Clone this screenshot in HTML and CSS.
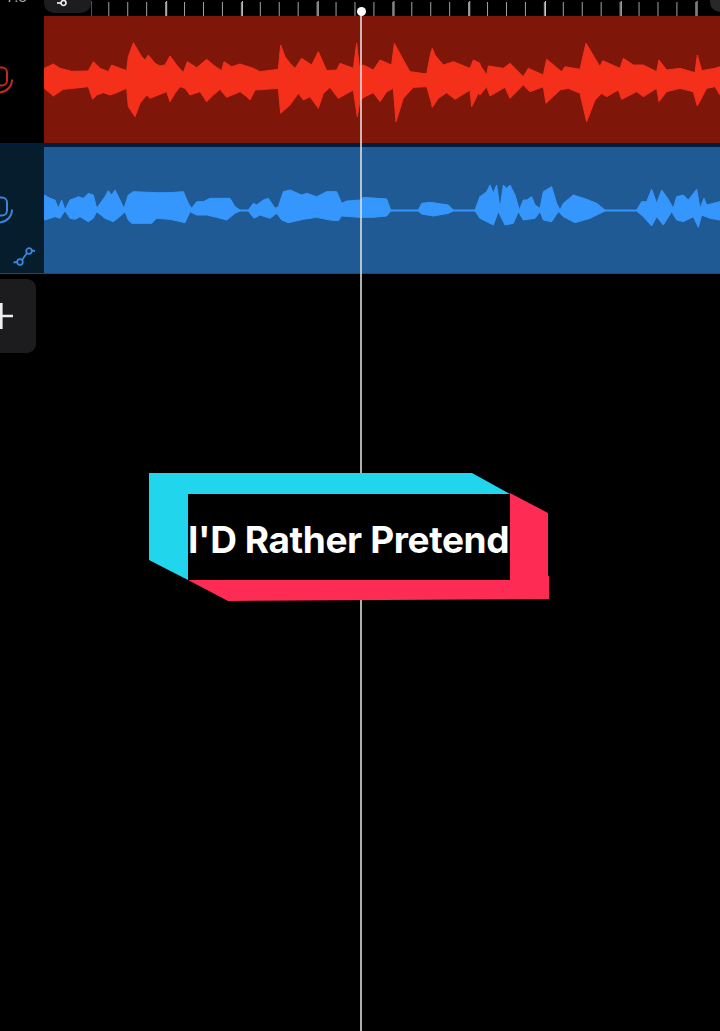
FILE: index.html
```html
<!DOCTYPE html>
<html lang="en">
<head>
<meta charset="utf-8">
<title>I'D Rather Pretend</title>
<link rel="stylesheet" href="styles.css">
</head>
<body>
<main class="screen">
  <header class="topbar">
    <div class="time">7.5</div>
    <div class="pill">
      <svg class="pill-icon" viewBox="0 0 11 8"><circle cx="6.500" cy="3" r="2.500"/><path d="M0 3h4"/></svg>
    </div>
    <div class="ruler"></div>
    <div class="corner"></div>
  </header>

  <section class="track track-red">
    <div class="track-head">
      <svg class="mic" viewBox="0 0 14 34"><path d="M-3 2.500h5a5 5 0 0 1 5 5v8a5 5 0 0 1-5 5h-5"/><path d="M12 14.500c0 7-5 12-12 13"/></svg>
    </div>
    <svg class="wave" viewBox="132 48 2028 381" preserveAspectRatio="none">
      <polygon points="133,205 160,192 180,205 215,214 265,213 280,185 300,205 325,215 335,195 360,205 380,212 385,170 400,128 425,170 435,180 445,165 465,190 480,198 495,195 510,168 530,195 550,218 562,185 590,203 620,178 640,195 665,212 672,185 695,200 720,192 720,275 680,292 660,268 640,285 620,305 600,275 570,285 555,265 540,260 525,280 510,305 500,275 450,295 440,285 420,310 405,350 385,320 380,265 350,278 330,285 310,278 290,285 278,298 265,260 220,265 190,268 160,288 133,265"/>
      <polygon transform="translate(720 0)" points="0,192 40,205 60,215 115,208 122,135 135,170 150,190 165,205 185,175 215,195 235,155 260,212 290,210 300,190 340,205 350,130 358,200 370,195 400,210 420,180 455,195 463,130 490,180 510,215 560,222 572,160 577,145 585,165 610,195 640,185 690,205 700,180 720,190 720,285 715,280 695,320 690,270 645,298 620,278 595,295 577,322 572,300 560,260 520,262 490,295 468,365 460,265 440,275 420,305 400,278 375,290 360,300 352,350 340,270 295,295 270,262 250,280 235,325 210,290 190,300 175,280 150,315 122,340 115,265 45,270 30,300 20,290 0,275"/>
      <polygon transform="translate(1440 0)" points="0,195 20,225 25,198 70,205 90,190 130,230 145,205 190,225 200,178 245,215 255,200 300,208 318,130 345,175 360,200 368,182 420,205 430,175 460,195 490,195 530,215 537,180 560,210 600,205 645,218 652,165 665,212 705,205 720,200 720,285 705,260 680,265 652,318 640,275 600,265 560,275 537,305 530,265 490,290 470,275 425,298 415,270 380,290 365,280 345,300 320,365 300,280 265,265 240,270 198,310 190,260 150,275 130,255 90,295 75,262 30,288 20,260 0,285"/>
    </svg>
  </section>

  <section class="track track-blue">
    <div class="track-head">
      <svg class="mic mic-blue" viewBox="0 0 14 34"><path d="M-3 2.500h5a5 5 0 0 1 5 5v8a5 5 0 0 1-5 5h-5"/><path d="M12 14.500c0 7-5 12-12 13"/></svg>
      <svg class="link" viewBox="0 0 24 20"><circle cx="8" cy="16" r="2.800"/><circle cx="17" cy="5" r="2.800"/><path d="M10 14l5-7M1.500 16.500l3.500-.5M19.500 4.500l3.500 .5"/></svg>
    </div>
    <svg class="wave" viewBox="132 21 2028 378" preserveAspectRatio="none">
      <polygon points="133,165 150,175 165,180 175,205 185,180 195,210 210,180 225,175 235,170 250,175 265,160 280,165 290,205 315,170 325,152 335,165 345,150 360,180 372,205 385,165 400,155 470,158 510,158 550,155 565,190 575,205 590,185 610,185 630,175 690,175 705,200 720,210 720,213 705,220 680,240 650,232 620,225 590,225 570,215 555,248 510,238 470,235 455,250 395,250 385,240 375,215 365,225 340,245 315,235 290,215 280,235 265,245 240,230 225,238 210,235 195,212 180,235 165,230 150,235 133,240"/>
      <polygon transform="translate(720 0)" points="0,210 25,210 40,190 50,195 70,180 85,175 105,205 115,200 130,155 150,150 185,165 200,160 230,170 260,155 290,155 305,190 320,183 360,180 370,172 440,177 452,210 535,210 545,190 570,187 625,195 640,210 705,210 720,170 720,235 705,213 640,213 625,220 580,228 545,222 535,213 452,213 440,228 400,232 360,232 305,228 295,242 270,240 230,232 190,238 145,248 125,240 110,220 90,235 60,225 42,235 25,213 0,213"/>
      <polygon transform="translate(1440 0)" points="0,170 20,155 30,135 40,160 50,135 60,205 70,135 80,145 90,135 105,165 118,210 130,180 140,180 155,170 165,195 180,205 190,155 215,140 230,190 240,210 250,190 280,165 320,178 350,190 375,210 470,210 485,185 500,185 515,148 530,190 545,150 560,170 580,205 590,170 610,165 625,180 650,148 660,205 672,175 680,195 720,185 720,240 690,235 665,225 655,262 640,230 610,245 590,240 575,215 550,255 530,230 515,258 490,230 470,213 375,213 330,235 285,248 250,230 235,215 215,245 190,240 180,215 165,235 130,240 115,215 100,250 75,255 55,215 40,255 20,245 0,235"/>
    </svg>
  </section>

  <button class="add" type="button" aria-label="Add track">
    <svg class="add-icon" viewBox="0 0 14 28"><path d="M1.300 1v26M0 14h13"/></svg>
  </button>

  <div class="caption">
    <svg class="shards" viewBox="0 0 401 129">
      <polygon class="shard-cyan" points="0,0 323,0 361,21 39,21 39,107 0,87"/>
      <polygon class="shard-pink" points="39,107 361,107 361,20 399,40 399,103 400,103 400,126 79,128"/>
    </svg>
    <p class="caption-text">I'D Rather Pretend</p>
  </div>

  <div class="playhead"></div>
</main>
</body>
</html>
```
FILE: styles.css
```css
* { box-sizing: border-box; }
html, body { margin: 0; background: #000; }
.screen {
  position: relative;
  width: 720px;
  height: 1031px;
  overflow: hidden;
  background: #000;
}
.topbar {
  display: flex;
  height: 16px;
  overflow: hidden;
}
.time {
  width: 44px;
  margin-top: -11px;
  height: 15px;
  font: 15px/15px "Liberation Sans", sans-serif;
  color: #a8a8a8;
  padding-left: 6px;
}
.pill {
  width: 47px;
  height: 13px;
  padding-left: 13px;
  background: #1d1d20;
  border-radius: 0 0 10px 10px;
}
.pill-icon {
  display: block;
  width: 11px;
  height: 8px;
  fill: none;
  stroke: #eee;
  stroke-width: 1.7;
}
.ruler {
  flex: 1;
  height: 15px;
  margin-top: 1px;
  background-image:
    linear-gradient(90deg, #c8c8c8 0, #c8c8c8 1.4px, transparent 1.4px),
    linear-gradient(90deg, #a4a4a4 0, #a4a4a4 1.3px, transparent 1.3px);
  background-repeat: repeat-x;
  background-size: 75.78px 15px, 18.945px 14px;
  background-position: 75.180px 0, 17.3px 1px;
}
.corner {
  width: 10px;
  height: 12px;
  background: #28282b;
  border-radius: 0 0 0 10px;
}
.track { display: flex; }
.track-red { height: 127px; }
.track-blue {
  height: 131px;
  padding-top: 4px;
  background: #021c3d;
  border-bottom: 1px solid #3c3f44;
}
.track-head {
  position: relative;
  width: 44px;
  flex: none;
}
.track-blue .track-head { background: #051d2d; margin-top: -2px; }
.wave {
  display: block;
  flex: 1;
  height: 100%;
  filter: blur(0.7px);
  stroke-width: 3;
  stroke-linejoin: round;
}
.track-red .wave { background: #7e1709; fill: #f4301a; stroke: #f4301a; }
.track-blue .wave { background: #1f5a94; fill: #3597fd; stroke: #3597fd; }
.mic {
  position: absolute;
  left: 0;
  top: 49px;
  width: 14px;
  height: 34px;
  fill: none;
  stroke: #c4291c;
  stroke-width: 2;
  overflow: visible;
}
.mic-blue { stroke: #3a85d8; top: 50px; }
.link {
  position: absolute;
  left: 12px;
  top: 101px;
  width: 24px;
  height: 20px;
  fill: none;
  stroke: #3a85d8;
  stroke-width: 1.8;
}
.add {
  display: flex;
  align-items: center;
  width: 36px;
  height: 74px;
  margin-top: 5px;
  padding: 0;
  border: 0;
  background: #1c1c1e;
  border-radius: 0 9px 9px 0;
}
.add-icon {
  display: block;
  width: 14px;
  height: 28px;
  fill: none;
  stroke: #eee;
  stroke-width: 2.6;
}
.caption {
  position: relative;
  z-index: 2;
  width: 322px;
  height: 86px;
  margin: 141px 0 0 188px;
  background: #000;
}
.shards {
  position: absolute;
  left: -39px;
  top: -21px;
  width: 401px;
  height: 129px;
}
.shard-cyan { fill: #20d5ec; }
.shard-pink { fill: #fe2c55; }
.caption-text {
  position: relative;
  margin: 0;
  height: 86px;
  font: 700 37px/92px Inter, "Liberation Sans", sans-serif;
  letter-spacing: -0.4px;
  color: #fff;
  white-space: nowrap;
}
.playhead {
  position: absolute;
  left: 360px;
  top: 10px;
  width: 2px;
  height: 1021px;
  background: rgba(225, 225, 225, 0.78);
}
.playhead::before {
  content: "";
  position: absolute;
  left: -3.500px;
  top: -3.500px;
  width: 9px;
  height: 9px;
  border-radius: 50%;
  background: #fff;
}
```
